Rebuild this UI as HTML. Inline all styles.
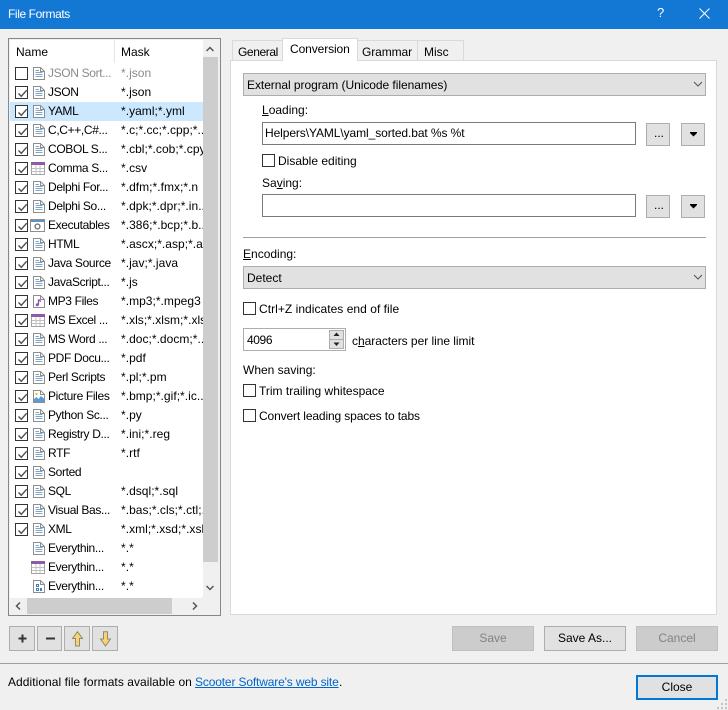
<!DOCTYPE html>
<html><head><meta charset="utf-8"><title>File Formats</title>
<style>
html,body{margin:0;padding:0}
body{width:728px;height:710px;position:relative;overflow:hidden;background:#f0f0f0;font:12px "Liberation Sans",sans-serif;color:#000}
.a,.t,.r,.b,.cb,.e{position:absolute;box-sizing:border-box}
.t{white-space:pre;line-height:16px;height:16px}
.b{background:#e1e1e1;border:1px solid #adadad;text-align:center}
.e{background:#fff;border:1px solid #7a7a7a}
.cb{width:13px;height:13px;border:1px solid #333;background:#fff}
.r{left:2px;width:193px;height:19px;overflow:hidden}
.r .cb{left:4px;top:3px}
.r .cb.c{background:#fff}
.r .cb.c svg{position:absolute;left:1px;top:1px}
.r svg.i{position:absolute;left:22px;top:2px}
.r span{position:absolute;top:1px;line-height:16px;white-space:pre}
.r .n{left:37px;width:68px;overflow:hidden;letter-spacing:-.35px}
.r .m{left:110px;letter-spacing:.03px}
.g{color:#8a8a8a}
u{text-decoration:underline}
.dis{background:#ccc;border-color:#bfbfbf;color:#838383}
</style></head><body>
<svg width="0" height="0" style="position:absolute">
<defs>
<symbol id="chk" viewBox="0 0 11 11"><path d="M1.5 5.5L4.3 8.3L9.7 2.2" fill="none" stroke="#505050" stroke-width="1.4"/></symbol>
<symbol id="doc" viewBox="0 0 14 15"><path d="M.5 1.5H7.5L11.5 5.5V13.5H.5Z" fill="#fff" stroke="#8d8d8d"/><path d="M7.5 1.5V5.5H11.5" fill="none" stroke="#8d8d8d"/><path d="M2.5 4.5H6M2.5 6.5H9.5M2.5 8.5H9.5M2.5 10.5H9.5" stroke="#7ea6cc"/></symbol>
<symbol id="tbl" viewBox="0 0 14 15"><path d="M.5 1.5H13.5V13.5H.5Z" fill="#fff" stroke="#a4a4a4"/><path d="M0 1H14V4H0Z" fill="#8e5aa8"/><path d="M1 7.5H13M1 10.5H13M5 4V13M9 4V13" stroke="#c0c0c0"/></symbol>
<symbol id="exe" viewBox="0 0 15 15"><path d="M.5 1.5H14.5V13.5H.5Z" fill="#fff" stroke="#8d8d8d"/><path d="M1 2H14V4H1Z" fill="#5b93c9"/><circle cx="7.5" cy="8.5" r="2.4" fill="#fff" stroke="#777" stroke-width="1.4"/></symbol>
<symbol id="mp3" viewBox="0 0 14 15"><path d="M.5 1.5H7.5L11.5 5.5V13.5H.5Z" fill="#fff" stroke="#8d8d8d"/><path d="M7.5 1.5V5.5H11.5" fill="none" stroke="#8d8d8d"/><path d="M5.5 5.5V10.5M5.5 5.5L8 7.5" fill="none" stroke="#8e4db5" stroke-width="1.3"/><circle cx="4.3" cy="10.8" r="1.5" fill="#8e4db5"/></symbol>
<symbol id="pic" viewBox="0 0 14 15"><path d="M.5 1.5H7.5L11.5 5.5V13.5H.5Z" fill="#fff" stroke="#8d8d8d"/><path d="M7.5 1.5V5.5H11.5" fill="none" stroke="#8d8d8d"/><circle cx="3.5" cy="5" r="1.2" fill="#f0b840"/><path d="M1 13V10L3.5 8L5.5 10L8 7L11 9.5V13Z" fill="#5a9bd5"/></symbol>
<symbol id="bin" viewBox="0 0 14 15"><path d="M.5 1.5H7.5L11.5 5.5V13.5H.5Z" fill="#fff" stroke="#8d8d8d"/><path d="M7.5 1.5V5.5H11.5" fill="none" stroke="#8d8d8d"/><path d="M3.5 5.5H5.5V7.5H3.5ZM3.5 9.5H5.5V11.5H3.5ZM7.5 9.5H8.5V11.5H7.5Z" fill="none" stroke="#3f7fbf"/></symbol>
</defs></svg>

<div class="a" style="left:0;top:0;width:728px;height:29px;background:#1378d4"></div>
<div class="t" style="left:8px;top:6px;color:#fff;letter-spacing:-.4px">File Formats</div>
<div class="t" style="left:657px;top:5px;color:#fff;font-size:13px">?</div>
<svg class="a" style="left:699px;top:8px" width="12" height="12"><path d="M.5 .5L10.5 10.5M10.5 .5L.5 10.5" stroke="#fff" stroke-width="1" fill="none"/></svg>

<!-- list -->
<div class="a" style="left:8px;top:38px;width:213px;height:578px;border:1px solid #828790;background:#f0f0f0">
 <div class="a" style="left:1px;top:1px;width:193px;height:558px;background:#fff;border-radius:0 0 3px 0"></div>
 <div class="a" style="left:105px;top:1px;width:1px;height:23px;background:#e5e5e5"></div>
 <div class="t" style="left:7px;top:5px">Name</div>
 <div class="t" style="left:112px;top:5px">Mask</div>
 <div class="a" style="left:1px;top:63px;width:193px;height:19px;background:#cce8ff"></div>

 <div class="r" style="top:25px"><div class="cb"></div><svg class="i" width="14" height="15"><use href="#doc"/></svg><span class="n g">JSON Sort...</span><span class="m g">*.json</span></div>
 <div class="r" style="top:44px"><div class="cb c"><svg width="11" height="11"><use href="#chk"/></svg></div><svg class="i" width="14" height="15"><use href="#doc"/></svg><span class="n">JSON</span><span class="m">*.json</span></div>
 <div class="r" style="top:63px"><div class="cb c"><svg width="11" height="11"><use href="#chk"/></svg></div><svg class="i" width="14" height="15"><use href="#doc"/></svg><span class="n">YAML</span><span class="m">*.yaml;*.yml</span></div>
 <div class="r" style="top:82px"><div class="cb c"><svg width="11" height="11"><use href="#chk"/></svg></div><svg class="i" width="14" height="15"><use href="#doc"/></svg><span class="n">C,C++,C#...</span><span class="m">*.c;*.cc;*.cpp;*...</span></div>
 <div class="r" style="top:101px"><div class="cb c"><svg width="11" height="11"><use href="#chk"/></svg></div><svg class="i" width="14" height="15"><use href="#doc"/></svg><span class="n">COBOL S...</span><span class="m">*.cbl;*.cob;*.cpy</span></div>
 <div class="r" style="top:120px"><div class="cb c"><svg width="11" height="11"><use href="#chk"/></svg></div><svg class="i" style="left:20px" width="14" height="15"><use href="#tbl"/></svg><span class="n">Comma S...</span><span class="m">*.csv</span></div>
 <div class="r" style="top:139px"><div class="cb c"><svg width="11" height="11"><use href="#chk"/></svg></div><svg class="i" width="14" height="15"><use href="#doc"/></svg><span class="n">Delphi For...</span><span class="m">*.dfm;*.fmx;*.n</span></div>
 <div class="r" style="top:158px"><div class="cb c"><svg width="11" height="11"><use href="#chk"/></svg></div><svg class="i" width="14" height="15"><use href="#doc"/></svg><span class="n">Delphi So...</span><span class="m">*.dpk;*.dpr;*.in...</span></div>
 <div class="r" style="top:177px"><div class="cb c"><svg width="11" height="11"><use href="#chk"/></svg></div><svg class="i" style="left:19px" width="15" height="15"><use href="#exe"/></svg><span class="n">Executables</span><span class="m">*.386;*.bcp;*.b...</span></div>
 <div class="r" style="top:196px"><div class="cb c"><svg width="11" height="11"><use href="#chk"/></svg></div><svg class="i" width="14" height="15"><use href="#doc"/></svg><span class="n">HTML</span><span class="m">*.ascx;*.asp;*.a...</span></div>
 <div class="r" style="top:215px"><div class="cb c"><svg width="11" height="11"><use href="#chk"/></svg></div><svg class="i" width="14" height="15"><use href="#doc"/></svg><span class="n">Java Source</span><span class="m">*.jav;*.java</span></div>
 <div class="r" style="top:234px"><div class="cb c"><svg width="11" height="11"><use href="#chk"/></svg></div><svg class="i" width="14" height="15"><use href="#doc"/></svg><span class="n">JavaScript...</span><span class="m">*.js</span></div>
 <div class="r" style="top:253px"><div class="cb c"><svg width="11" height="11"><use href="#chk"/></svg></div><svg class="i" width="14" height="15"><use href="#mp3"/></svg><span class="n">MP3 Files</span><span class="m">*.mp3;*.mpeg3</span></div>
 <div class="r" style="top:272px"><div class="cb c"><svg width="11" height="11"><use href="#chk"/></svg></div><svg class="i" style="left:20px" width="14" height="15"><use href="#tbl"/></svg><span class="n">MS Excel ...</span><span class="m">*.xls;*.xlsm;*.xls</span></div>
 <div class="r" style="top:291px"><div class="cb c"><svg width="11" height="11"><use href="#chk"/></svg></div><svg class="i" width="14" height="15"><use href="#doc"/></svg><span class="n">MS Word ...</span><span class="m">*.doc;*.docm;*...</span></div>
 <div class="r" style="top:310px"><div class="cb c"><svg width="11" height="11"><use href="#chk"/></svg></div><svg class="i" width="14" height="15"><use href="#doc"/></svg><span class="n">PDF Docu...</span><span class="m">*.pdf</span></div>
 <div class="r" style="top:329px"><div class="cb c"><svg width="11" height="11"><use href="#chk"/></svg></div><svg class="i" width="14" height="15"><use href="#doc"/></svg><span class="n">Perl Scripts</span><span class="m">*.pl;*.pm</span></div>
 <div class="r" style="top:348px"><div class="cb c"><svg width="11" height="11"><use href="#chk"/></svg></div><svg class="i" width="14" height="15"><use href="#pic"/></svg><span class="n">Picture Files</span><span class="m">*.bmp;*.gif;*.ic...</span></div>
 <div class="r" style="top:367px"><div class="cb c"><svg width="11" height="11"><use href="#chk"/></svg></div><svg class="i" width="14" height="15"><use href="#doc"/></svg><span class="n">Python Sc...</span><span class="m">*.py</span></div>
 <div class="r" style="top:386px"><div class="cb c"><svg width="11" height="11"><use href="#chk"/></svg></div><svg class="i" width="14" height="15"><use href="#doc"/></svg><span class="n">Registry D...</span><span class="m">*.ini;*.reg</span></div>
 <div class="r" style="top:405px"><div class="cb c"><svg width="11" height="11"><use href="#chk"/></svg></div><svg class="i" width="14" height="15"><use href="#doc"/></svg><span class="n">RTF</span><span class="m">*.rtf</span></div>
 <div class="r" style="top:424px"><div class="cb c"><svg width="11" height="11"><use href="#chk"/></svg></div><svg class="i" width="14" height="15"><use href="#doc"/></svg><span class="n">Sorted</span></div>
 <div class="r" style="top:443px"><div class="cb c"><svg width="11" height="11"><use href="#chk"/></svg></div><svg class="i" width="14" height="15"><use href="#doc"/></svg><span class="n">SQL</span><span class="m">*.dsql;*.sql</span></div>
 <div class="r" style="top:462px"><div class="cb c"><svg width="11" height="11"><use href="#chk"/></svg></div><svg class="i" width="14" height="15"><use href="#doc"/></svg><span class="n">Visual Bas...</span><span class="m">*.bas;*.cls;*.ctl;...</span></div>
 <div class="r" style="top:481px"><div class="cb c"><svg width="11" height="11"><use href="#chk"/></svg></div><svg class="i" width="14" height="15"><use href="#doc"/></svg><span class="n">XML</span><span class="m">*.xml;*.xsd;*.xsl</span></div>
 <div class="r" style="top:500px"><svg class="i" width="14" height="15"><use href="#doc"/></svg><span class="n">Everythin...</span><span class="m">*.*</span></div>
 <div class="r" style="top:519px"><svg class="i" style="left:20px" width="14" height="15"><use href="#tbl"/></svg><span class="n">Everythin...</span><span class="m">*.*</span></div>
 <div class="r" style="top:538px"><svg class="i" width="14" height="15"><use href="#bin"/></svg><span class="n">Everythin...</span><span class="m">*.*</span></div>

 <!-- vscroll -->
 <div class="a" style="left:194px;top:18px;width:15px;height:505px;background:#cdcdcd"></div>
 <svg class="a" style="left:197px;top:7px" width="8" height="6"><path d="M.5 5L4 1.5L7.5 5" fill="none" stroke="#555" stroke-width="1.5"/></svg>
 <svg class="a" style="left:197px;top:546px" width="8" height="6"><path d="M.5 1L4 4.5L7.5 1" fill="none" stroke="#555" stroke-width="1.5"/></svg>
 <!-- hscroll -->
 <div class="a" style="left:18px;top:559px;width:145px;height:16px;background:#cdcdcd"></div>
 <svg class="a" style="left:6px;top:563px" width="6" height="8"><path d="M5 .5L1.5 4L5 7.5" fill="none" stroke="#555" stroke-width="1.5"/></svg>
 <svg class="a" style="left:183px;top:563px" width="6" height="8"><path d="M1 .5L4.5 4L1 7.5" fill="none" stroke="#555" stroke-width="1.5"/></svg>
</div>

<!-- list buttons -->
<div class="b" style="left:9px;top:626px;width:26px;height:25px"><svg class="a" style="left:7px;top:6px" width="11" height="11"><path d="M5.5 1.5V9.5M1.5 5.5H9.5" stroke="#333" stroke-width="2"/></svg></div>
<div class="b" style="left:37px;top:626px;width:25px;height:25px"><svg class="a" style="left:7px;top:6px" width="11" height="11"><path d="M1 5.5H10" stroke="#333" stroke-width="2"/></svg></div>
<div class="b" style="left:64px;top:626px;width:26px;height:25px"><svg class="a" style="left:6px;top:4px" width="13" height="16"><path d="M6.5 .7L11.5 7.5H8.5V15H4.5V7.5H1.5Z" fill="#fbd26b" stroke="#8a8a7a"/></svg></div>
<div class="b" style="left:92px;top:626px;width:26px;height:25px"><svg class="a" style="left:6px;top:4px" width="13" height="16"><path d="M4.5 .7H8.5V8H11.5L6.5 15L1.5 8H4.5Z" fill="#fbd26b" stroke="#8a8a7a"/></svg></div>

<!-- tabs -->
<div class="a" style="left:232px;top:40px;width:232px;height:21px;background:#f0f0f0;border:1px solid #d9d9d9"></div>
<div class="a" style="left:417px;top:40px;width:1px;height:21px;background:#d9d9d9"></div>
<div class="a" style="left:230px;top:60px;width:487px;height:555px;background:#fff;border:1px solid #d9d9d9"></div>
<div class="a" style="left:282px;top:38px;width:76px;height:23px;background:#fff;border:1px solid #d9d9d9;border-bottom:0"></div>
<div class="t" style="left:238px;top:44px;letter-spacing:-.4px">General</div>
<div class="t" style="left:290px;top:41px;letter-spacing:-.1px">Conversion</div>
<div class="t" style="left:362px;top:44px;letter-spacing:-.1px">Grammar</div>
<div class="t" style="left:424px;top:44px">Misc</div>

<!-- panel -->
<div class="b" style="left:243px;top:73px;width:463px;height:23px"></div>
<div class="t" style="left:247px;top:77px;letter-spacing:-.05px">External program (Unicode filenames)</div>
<svg class="a" style="left:693px;top:81px" width="10" height="7"><path d="M1 1L5 5L9 1" fill="none" stroke="#555" stroke-width="1"/></svg>

<div class="t" style="left:262px;top:102px"><u>L</u>oading:</div>
<div class="e" style="left:262px;top:122px;width:374px;height:23px"></div>
<div class="t" style="left:265px;top:125px;letter-spacing:-.09px">Helpers\YAML\yaml_sorted.bat %s %t</div>
<div class="b" style="left:646px;top:123px;width:24px;height:23px"></div>
<div class="t" style="left:654px;top:125px">...</div>
<div class="b" style="left:681px;top:123px;width:24px;height:23px"></div>
<svg class="a" style="left:690px;top:132px" width="7" height="5"><path d="M0 0H7V1L3.5 4.5L0 1Z" fill="#000"/></svg>

<div class="cb" style="left:262px;top:154px"></div>
<div class="t" style="left:278px;top:153px">Disable editing</div>

<div class="t" style="left:262px;top:175px">Sa<u>v</u>ing:</div>
<div class="e" style="left:262px;top:194px;width:374px;height:23px"></div>
<div class="b" style="left:646px;top:195px;width:24px;height:23px"></div>
<div class="t" style="left:654px;top:197px">...</div>
<div class="b" style="left:681px;top:195px;width:24px;height:23px"></div>
<svg class="a" style="left:690px;top:204px" width="7" height="5"><path d="M0 0H7V1L3.5 4.5L0 1Z" fill="#000"/></svg>

<div class="a" style="left:243px;top:237px;width:463px;height:1px;background:#a0a0a0"></div>

<div class="t" style="left:243px;top:246px"><u>E</u>ncoding:</div>
<div class="b" style="left:243px;top:266px;width:463px;height:23px"></div>
<div class="t" style="left:247px;top:270px">Detect</div>
<svg class="a" style="left:693px;top:274px" width="10" height="7"><path d="M1 1L5 5L9 1" fill="none" stroke="#555" stroke-width="1"/></svg>

<div class="cb" style="left:243px;top:302px"></div>
<div class="t" style="left:259px;top:301px;letter-spacing:.04px">Ctrl+Z indicates end of file</div>

<div class="a" style="left:243px;top:328px;width:103px;height:23px;background:#fff;border:1px solid #adadad"></div>
<div class="t" style="left:247px;top:332px;letter-spacing:-.4px">4096</div>
<div class="b" style="left:329px;top:330px;width:15px;height:10px"></div>
<div class="b" style="left:329px;top:339px;width:15px;height:10px"></div>
<svg class="a" style="left:333px;top:332px" width="7" height="5"><path d="M3.5 .5L6.5 4H.5Z" fill="#222"/></svg>
<svg class="a" style="left:333px;top:342px" width="7" height="5"><path d="M.5 .5H6.5L3.5 4Z" fill="#222"/></svg>
<div class="t" style="left:352px;top:333px;letter-spacing:-.04px">c<u>h</u>aracters per line limit</div>

<div class="t" style="left:243px;top:362px">When saving:</div>
<div class="cb" style="left:243px;top:384px"></div>
<div class="t" style="left:259px;top:383px">Trim trailing whitespace</div>
<div class="cb" style="left:243px;top:409px"></div>
<div class="t" style="left:259px;top:408px;letter-spacing:-.13px">Convert leading spaces to tabs</div>

<!-- bottom buttons -->
<div class="b dis" style="left:452px;top:626px;width:82px;height:25px;line-height:23px">Save</div>
<div class="b" style="left:544px;top:626px;width:82px;height:25px;line-height:23px">Save As...</div>
<div class="b dis" style="left:636px;top:626px;width:82px;height:25px;line-height:23px">Cancel</div>

<div class="a" style="left:0;top:663px;width:728px;height:1px;background:#a0a0a0"></div>
<div class="t" style="left:8px;top:674px;letter-spacing:.05px">Additional file formats available on <span style="position:absolute;left:187px;color:#0066cc;text-decoration:underline;letter-spacing:-.15px">Scooter Software's web site</span><span style="position:absolute;left:331px">.</span></div>
<div class="b" style="left:636px;top:675px;width:82px;height:25px;line-height:21px;border:2px solid #0078d7">Close</div>
<svg class="a" style="left:716px;top:698px" width="12" height="12"><path d="M9 1h2v2H9zM5 5h2v2H5zM9 5h2v2H9zM1 9h2v2H1zM5 9h2v2H5zM9 9h2v2H9z" fill="#c4c4c4"/></svg>
</body></html>
